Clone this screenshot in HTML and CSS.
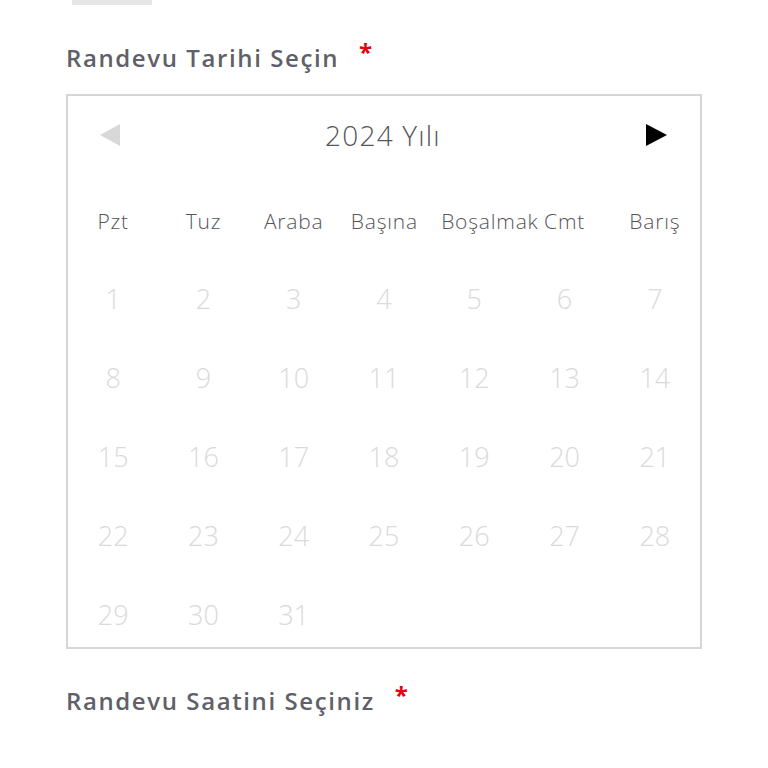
FILE: index.html
```html
<!DOCTYPE html>
<html lang="tr">
<head>
<meta charset="utf-8">
<link rel="stylesheet" href="styles.css">
</head>
<body>
<div class="page">
  <div class="topbar"></div>
  <label class="label">Randevu Tarihi Seçin <span class="req">*</span></label>
  <div class="calendar">
    <div class="cal-head">
      <span class="arrow arrow-prev"></span>
      <span class="title">2024 Yılı</span>
      <span class="arrow arrow-next"></span>
    </div>
    <div class="grid weekdays">
      <span>Pzt</span><span>Tuz</span><span>Araba</span><span>Başına</span><span>Boşalmak</span><span>Cmt</span><span>Barış</span>
    </div>
    <div class="grid days">
      <span>1</span><span>2</span><span>3</span><span>4</span><span>5</span><span>6</span><span>7</span>
      <span>8</span><span>9</span><span>10</span><span>11</span><span>12</span><span>13</span><span>14</span>
      <span>15</span><span>16</span><span>17</span><span>18</span><span>19</span><span>20</span><span>21</span>
      <span>22</span><span>23</span><span>24</span><span>25</span><span>26</span><span>27</span><span>28</span>
      <span>29</span><span>30</span><span>31</span>
    </div>
  </div>
  <label class="label label-2">Randevu Saatini Seçiniz <span class="req">*</span></label>
</div>
</body>
</html>
```
FILE: styles.css
```css
html, body {
  margin: 0;
  padding: 0;
  background: #ffffff;
}
.page {
  padding-left: 66px;
  width: 636px;
  font-family: "Open Sans", "Liberation Sans", sans-serif;
}
.topbar {
  width: 80px;
  height: 5px;
  margin-left: 6px;
  background: #e6e6e6;
}
.label {
  display: block;
  margin-top: 37px;
  font-size: 24px;
  font-weight: 600;
  color: #606068;
  line-height: 32px;
  letter-spacing: 1.6px;
}
.req {
  color: #e8000b;
  font-weight: 700;
  margin-left: 12px;
  position: relative;
  top: -6px;
}
.calendar {
  margin-top: 20px;
  border: 2px solid #d6d6d6;
  height: 555px;
  box-sizing: border-box;
}
.cal-head {
  height: 78px;
  display: flex;
  align-items: center;
  justify-content: space-between;
  padding: 0 33px 0 32px;
}
.arrow {
  width: 0;
  height: 0;
  border-top: 11px solid transparent;
  border-bottom: 11px solid transparent;
}
.arrow-prev {
  border-right: 20px solid #d8d8d8;
}
.arrow-next {
  border-left: 21px solid #000;
}
.title {
  font-size: 28px;
  font-weight: 300;
  color: #55555a;
  letter-spacing: 1.2px;
}
.grid {
  display: grid;
  grid-template-columns: repeat(7, 1fr);
  text-align: center;
}
.weekdays {
  margin-top: 23px;
  height: 48px;
  align-items: center;
  font-size: 21px;
  font-weight: 300;
  color: #55555a;
  white-space: nowrap;
  letter-spacing: 0.8px;
}
.weekdays span {
  padding: 0 12px;
  min-width: 0;
}
.days {
  margin-top: 34px;
  grid-auto-rows: 79px;
  font-size: 27px;
  font-weight: 300;
  color: #dadada;
}
.days span {
  line-height: 40px;
}
.label-2 {
  margin-top: 36px;
}
```
